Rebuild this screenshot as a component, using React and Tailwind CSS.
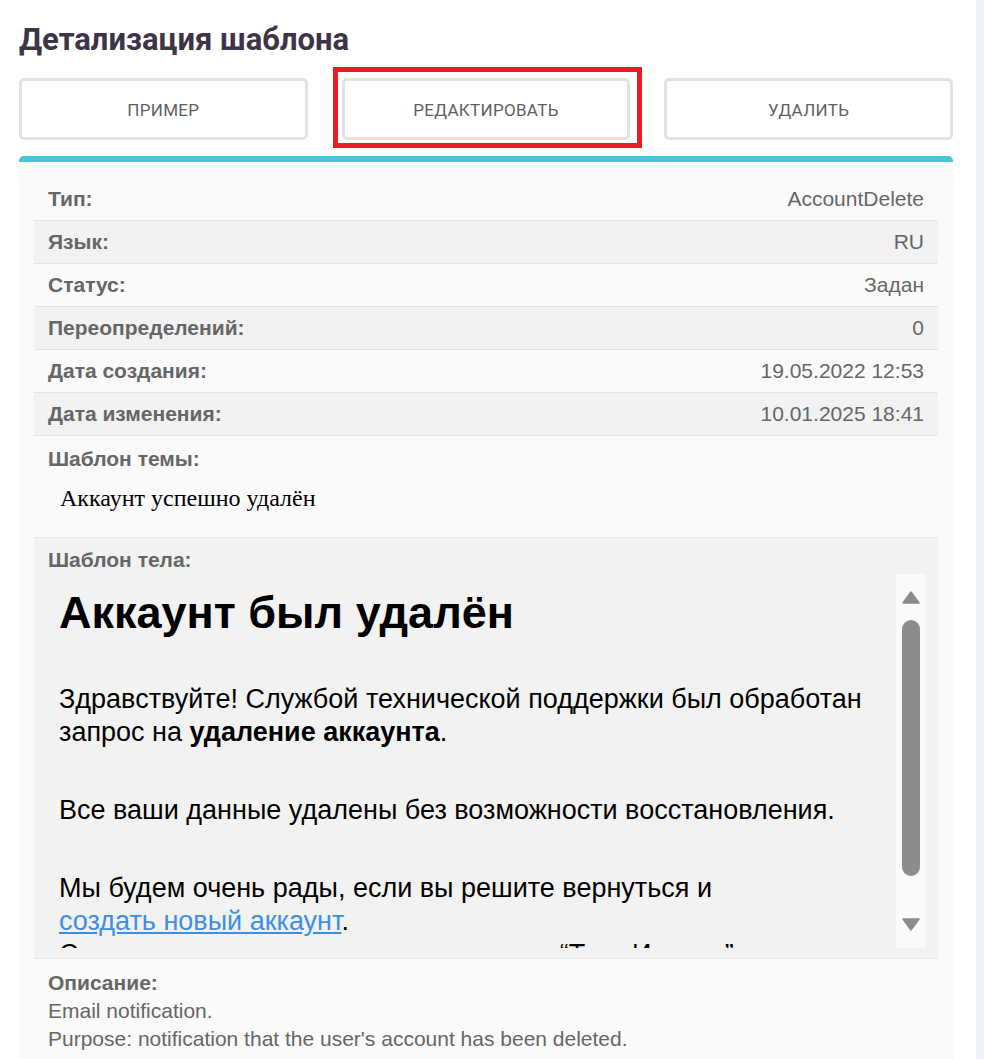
import React from "react";

const rows = [
  ["Тип:", "AccountDelete"],
  ["Язык:", "RU"],
  ["Статус:", "Задан"],
  ["Переопределений:", "0"],
  ["Дата создания:", "19.05.2022 12:53"],
  ["Дата изменения:", "10.01.2025 18:41"],
];

function Btn({ children }) {
  return (
    <button className="h-[62px] w-full rounded-[5px] border-[3px] border-[#e2e2e2] bg-white pt-[3px] text-[17px] uppercase tracking-[0.3px] text-[#5f5f5f] font-['Roboto',sans-serif]">
      {children}
    </button>
  );
}

export default function App() {
  return (
    <div className="flex min-h-screen bg-white font-['Liberation_Sans',Arial,sans-serif]">
      <div className="ml-[19px] w-[934px] pt-[24px]">
        <h1 className="text-[31px] leading-[32px] font-bold text-[#3d3446] font-['Roboto',sans-serif]">
          Детализация шаблона
        </h1>

        <div className="mt-[22px] grid grid-cols-3 gap-[34px]">
          <Btn>Пример</Btn>
          <div className="relative">
            <Btn>Редактировать</Btn>
            <div className="pointer-events-none absolute left-[-9px] right-[-12px] top-[-11px] bottom-[-8px] border-[5px] border-[#ec1c24]" />
          </div>
          <Btn>Удалить</Btn>
        </div>

        <div className="mt-[16px] overflow-hidden rounded-t-[5px] bg-[#fafafa]">
          <div className="h-[6px] bg-[#45c6d6]" />
          <div className="px-[15px] pt-[16px] pb-[40px] text-[21px] text-[#666666]">
            {rows.map(([k, v], i) => (
              <div
                key={k}
                className={`flex h-[43px] items-center justify-between border-b border-[#e4e4e4] px-[14px] ${
                  i % 2 === 1 ? "bg-[#f2f2f2]" : "bg-[#fafafa]"
                }`}
              >
                <span className="font-bold">{k}</span>
                <span>{v}</span>
              </div>
            ))}

            <div className="h-[102px] border-b border-[#e4e4e4] px-[14px] pt-[11px]">
              <div className="font-bold leading-[24px]">Шаблон темы:</div>
              <div className="mt-[13px] pl-[12px] text-[24px] leading-[28px] text-black font-['Liberation_Serif',serif]">
                Аккаунт успешно удалён
              </div>
            </div>

            <div className="h-[421px] border-b border-[#e4e4e4] bg-[#f2f2f2] pl-[14px] pr-[13px] pt-[10px]">
              <div className="font-bold leading-[24px]">Шаблон тела:</div>
              <div className="mt-[2px] flex h-[374px]">
                <div className="flex-1 overflow-hidden pl-[11px] text-black">
                  <div className="mt-[13px] text-[45px] leading-[52px] font-bold">
                    Аккаунт был удалён
                  </div>
                  <p className="mt-[44px] text-[27px] leading-[33px]">
                    Здравствуйте! Службой технической поддержки был обработан
                    <br />
                    запрос на <b>удаление аккаунта</b>.
                  </p>
                  <p className="mt-[45px] text-[27px] leading-[33px]">
                    Все ваши данные удалены без возможности восстановления.
                  </p>
                  <p className="mt-[45px] text-[27px] leading-[33px]">
                    Мы будем очень рады, если вы решите вернуться и
                    <br />
                    <a className="text-[#3d8fe6] underline">создать новый аккаунт</a>.
                    <br />
                    С уважением, команда поддержки сети “Тест Иванов”
                  </p>
                </div>
                <div className="flex w-[29px] flex-col items-center bg-[#fafafa] pt-[17px] pb-[17px]">
                  <svg width="18" height="13" viewBox="0 0 18 13">
                    <path d="M9 1 L17 12 L1 12 Z" fill="#8c8c8c" stroke="#8c8c8c" strokeLinejoin="round" strokeWidth="1.5" />
                  </svg>
                  <div className="mt-[16px] mb-[42px] w-[18px] flex-1 rounded-full bg-[#8c8c8c]" />
                  <svg width="18" height="13" viewBox="0 0 18 13">
                    <path d="M1 1 L17 1 L9 12 Z" fill="#8c8c8c" stroke="#8c8c8c" strokeLinejoin="round" strokeWidth="1.5" />
                  </svg>
                </div>
              </div>
            </div>

            <div className="px-[14px] pt-[10px] text-[21px] leading-[28px]">
              <div className="font-bold">Описание:</div>
              <div>Email notification.</div>
              <div>Purpose: notification that the user's account has been deleted.</div>
            </div>
          </div>
        </div>
      </div>
      <div className="flex-1" />
      <div className="w-[8px] bg-[#eef2f9]" />
    </div>
  );
}
